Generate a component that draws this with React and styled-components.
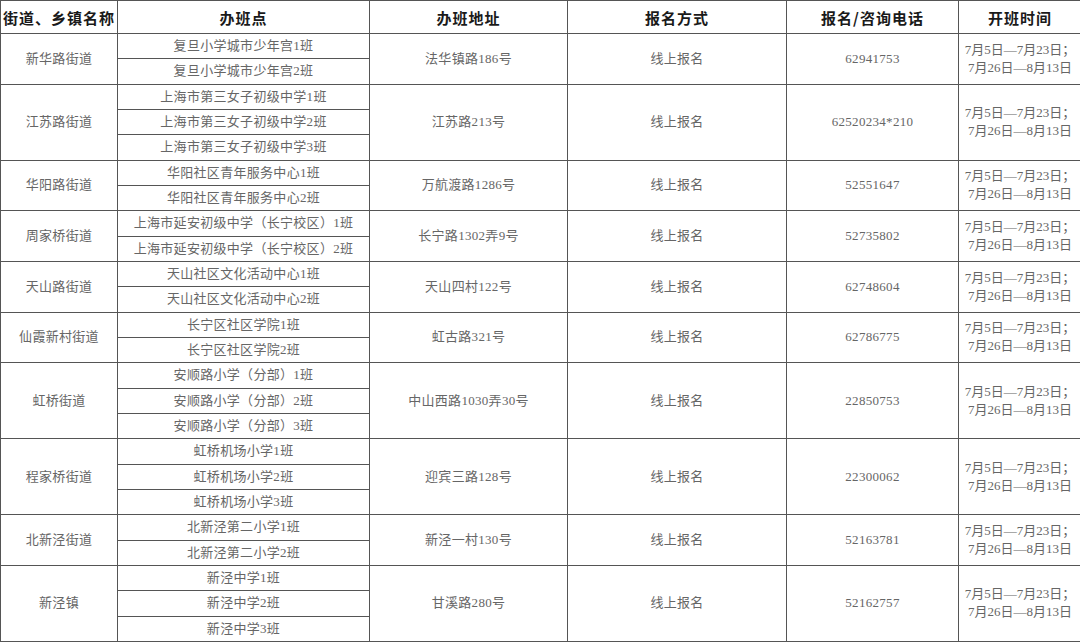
import React from "react";
import styled, { createGlobalStyle } from "styled-components";

const GlobalStyle = createGlobalStyle`
  html, body {
    margin: 0;
    padding: 0;
    background: #fff;
    overflow: hidden;
  }
`;

const Table = styled.table`
  width: 1081px;
  border-collapse: collapse;
  table-layout: fixed;
  font-family: "Liberation Serif", "Noto Sans CJK SC", serif;
  color: #666;
  border: 1px solid #555;
`;

const Head = styled.th`
  height: 32px;
  padding: 0;
  border: 1px solid #555;
  font-family: "Noto Sans CJK SC", sans-serif;
  font-weight: 700;
  font-size: 15px;
  letter-spacing: 1px;
  color: #1a1a1a;
  text-align: center;
  white-space: nowrap;
  overflow: hidden;
`;

const Row = styled.tr`
  height: 25.33px;
`;

const Cell = styled.td`
  padding: 0;
  border: 1px solid #555;
  font-size: 13px;
  letter-spacing: 0.3px;
  text-align: center;
  vertical-align: middle;
  white-space: nowrap;
  overflow: hidden;
  line-height: ${(p) => (p.$dates ? "18px" : "20px")};
`;

const Dates = styled.span`
  display: inline-block;
  text-align: center;
  letter-spacing: 0;
  font-size: 13px;
`;

const columns = [
  { title: "街道、乡镇名称", width: 117 },
  { title: "办班点", width: 252 },
  { title: "办班地址", width: 198 },
  { title: "报名方式", width: 219 },
  { title: "报名/咨询电话", width: 172 },
  { title: "开班时间", width: 123 },
];

const groups = [
  { street: "新华路街道", sites: ["复旦小学城市少年宫1班", "复旦小学城市少年宫2班"], address: "法华镇路186号", phone: "62941753" },
  { street: "江苏路街道", sites: ["上海市第三女子初级中学1班", "上海市第三女子初级中学2班", "上海市第三女子初级中学3班"], address: "江苏路213号", phone: "62520234*210" },
  { street: "华阳路街道", sites: ["华阳社区青年服务中心1班", "华阳社区青年服务中心2班"], address: "万航渡路1286号", phone: "52551647" },
  { street: "周家桥街道", sites: ["上海市延安初级中学（长宁校区）1班", "上海市延安初级中学（长宁校区）2班"], address: "长宁路1302弄9号", phone: "52735802" },
  { street: "天山路街道", sites: ["天山社区文化活动中心1班", "天山社区文化活动中心2班"], address: "天山四村122号", phone: "62748604" },
  { street: "仙霞新村街道", sites: ["长宁区社区学院1班", "长宁区社区学院2班"], address: "虹古路321号", phone: "62786775" },
  { street: "虹桥街道", sites: ["安顺路小学（分部）1班", "安顺路小学（分部）2班", "安顺路小学（分部）3班"], address: "中山西路1030弄30号", phone: "22850753" },
  { street: "程家桥街道", sites: ["虹桥机场小学1班", "虹桥机场小学2班", "虹桥机场小学3班"], address: "迎宾三路128号", phone: "22300062" },
  { street: "北新泾街道", sites: ["北新泾第二小学1班", "北新泾第二小学2班"], address: "新泾一村130号", phone: "52163781" },
  { street: "新泾镇", sites: ["新泾中学1班", "新泾中学2班", "新泾中学3班"], address: "甘溪路280号", phone: "52162757" },
];

const Group = ({ g }) => {
  const n = g.sites.length;
  return g.sites.map((site, i) => (
    <Row key={site}>
      {i === 0 && <Cell rowSpan={n}>{g.street}</Cell>}
      <Cell>{site}</Cell>
      {i === 0 && (
        <>
          <Cell rowSpan={n}>{g.address}</Cell>
          <Cell rowSpan={n}>线上报名</Cell>
          <Cell rowSpan={n}>{g.phone}</Cell>
          <Cell rowSpan={n} $dates>
            <Dates>
              7月5日—7月23日；
              <br />
              7月26日—8月13日
            </Dates>
          </Cell>
        </>
      )}
    </Row>
  ));
};

export default function App() {
  return (
    <>
      <GlobalStyle />
      <Table>
        <colgroup>
          {columns.map((c) => (
            <col key={c.title} style={{ width: c.width }} />
          ))}
        </colgroup>
        <thead>
          <tr>
            {columns.map((c) => (
              <Head key={c.title}>{c.title}</Head>
            ))}
          </tr>
        </thead>
        <tbody>
          {groups.map((g) => (
            <Group key={g.street} g={g} />
          ))}
        </tbody>
      </Table>
    </>
  );
}
